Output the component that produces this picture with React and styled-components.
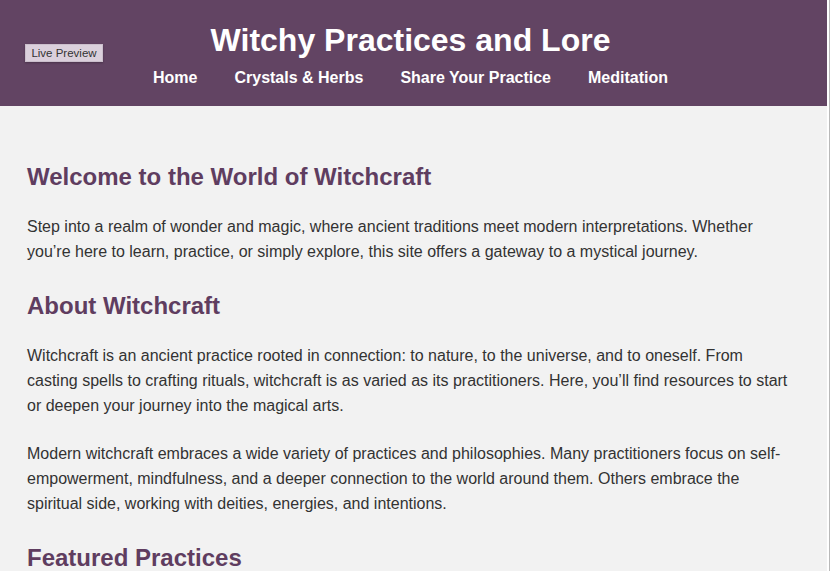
import React from 'react'
import styled, { createGlobalStyle } from 'styled-components'

const GlobalStyle = createGlobalStyle`
    * {
        box-sizing: border-box;
    }
    body {
        margin: 0;
        background: #ffffff;
        font-family: "Liberation Sans", Arial, Helvetica, sans-serif;
    }
`

const Frame = styled.div`
    width: 830px;
    height: 571px;
    overflow: hidden;
    padding-right: 2px;
    border-right: 1px solid #b9b9b9;
    background: #ffffff;
`

const Page = styled.div`
    min-height: 571px;
    background: #f2f2f2;
    color: #333333;
`

const Header = styled.header`
    position: relative;
    background: #624463;
    color: #ffffff;
    text-align: center;
    padding: 22px 6px 19px 0;
`

const Title = styled.h1`
    margin: 0;
    font-size: 32px;
    line-height: 36px;
    font-weight: 700;
`

const Nav = styled.nav`
    display: flex;
    justify-content: center;
    gap: 37px;
    margin-top: 11px;
`

const NavLink = styled.a`
    color: #ffffff;
    font-size: 16px;
    line-height: 18px;
    font-weight: 700;
    text-decoration: none;
`

const PreviewButton = styled.button`
    position: absolute;
    left: 25px;
    top: 44px;
    width: 78px;
    height: 18px;
    padding: 0;
    border: 1px solid #cbbfcc;
    background: #dbd0dc;
    color: #333333;
    font-family: "Liberation Sans", Arial, sans-serif;
    font-size: 11.5px;
    line-height: 16px;
    box-shadow: 0 1px 2px rgba(0, 0, 0, 0.25);
`

const Main = styled.main`
    padding: 29px 33px 20px 27px;
`

const Section = styled.section`
    & + & {
        margin-top: 5px;
    }
`

const Heading = styled.h2`
    margin: 28px 0 22px;
    font-size: 24px;
    line-height: 28.8px;
    font-weight: 700;
    color: #5f3d60;
`

const Text = styled.p`
    margin: 0 0 23px;
    font-size: 16px;
    line-height: 25px;
    color: #333333;
`

const links = ['Home', 'Crystals & Herbs', 'Share Your Practice', 'Meditation']

const sections = [
    {
        title: 'Welcome to the World of Witchcraft',
        paragraphs: [
            'Step into a realm of wonder and magic, where ancient traditions meet modern interpretations. Whether you\u2019re here to learn, practice, or simply explore, this site offers a gateway to a mystical journey.',
        ],
    },
    {
        title: 'About Witchcraft',
        paragraphs: [
            'Witchcraft is an ancient practice rooted in connection: to nature, to the universe, and to oneself. From casting spells to crafting rituals, witchcraft is as varied as its practitioners. Here, you\u2019ll find resources to start or deepen your journey into the magical arts.',
            'Modern witchcraft embraces a wide variety of practices and philosophies. Many practitioners focus on self-empowerment, mindfulness, and a deeper connection to the world around them. Others embrace the spiritual side, working with deities, energies, and intentions.',
        ],
    },
    {
        title: 'Featured Practices',
        paragraphs: [],
    },
]

const App = () => {
    return (
        <Frame>
            <GlobalStyle />
            <Page>
                <Header>
                    <PreviewButton>Live Preview</PreviewButton>
                    <Title>Witchy Practices and Lore</Title>
                    <Nav>
                        {links.map(link => (
                            <NavLink key={link} href='#'>{link}</NavLink>
                        ))}
                    </Nav>
                </Header>
                <Main>
                    {sections.map(section => (
                        <Section key={section.title}>
                            <Heading>{section.title}</Heading>
                            {section.paragraphs.map((text, i) => (
                                <Text key={i}>{text}</Text>
                            ))}
                        </Section>
                    ))}
                </Main>
            </Page>
        </Frame>
    )
}

export default App
